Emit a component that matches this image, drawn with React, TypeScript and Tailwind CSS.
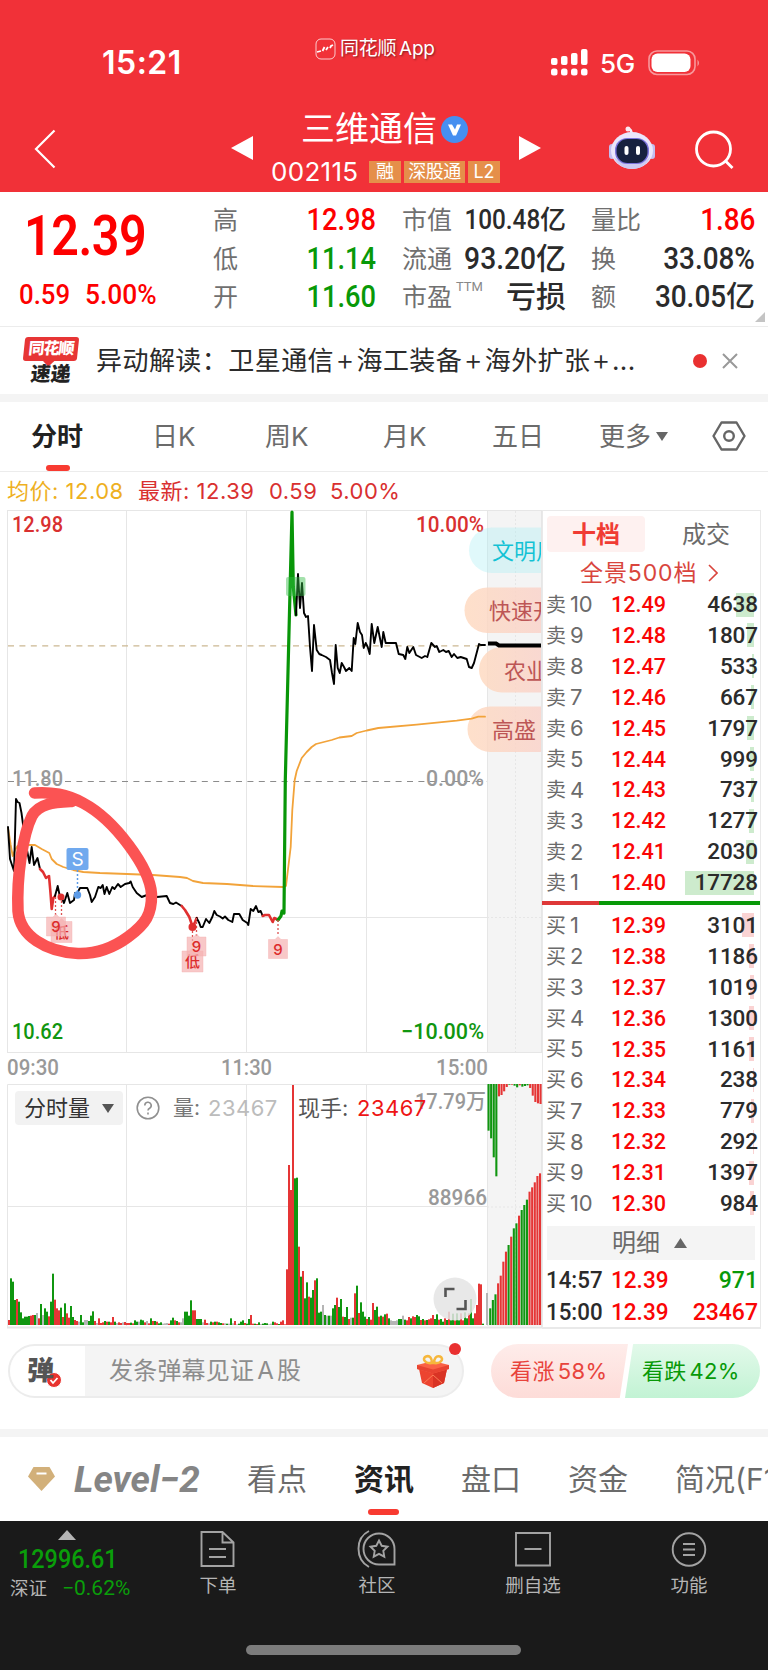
import clsx from "clsx";
import type { ReactNode } from "react";

const quoteRows = [
    {
        high: ["高", "12.98", "text-[#fd0000]"],
        cap: ["市值", "100.48", "亿"],
        ratio: ["量比", "1.86", ""],
    },
    {
        high: ["低", "11.14", "text-[#089908]"],
        cap: ["流通", "93.20", "亿"],
        ratio: ["换", "33.08%", ""],
    },
    {
        high: ["开", "11.60", "text-[#089908]"],
        cap: ["市盈", "", "亏损"],
        ratio: ["额", "30.05", "亿"],
    },
];

const periods = [
    { label: "日K", cell: "w-[113px]" },
    { label: "周K", cell: "w-[118px]" },
    { label: "月K", cell: "w-[109px]" },
    { label: "五日", cell: "w-[107px]" },
];

const asks: [number, string, number][] = [
    [10, "12.49", 4638],
    [9, "12.48", 1807],
    [8, "12.47", 533],
    [7, "12.46", 667],
    [6, "12.45", 1797],
    [5, "12.44", 999],
    [4, "12.43", 737],
    [3, "12.42", 1277],
    [2, "12.41", 2030],
    [1, "12.40", 17728],
];

const bids: [number, string, number][] = [
    [1, "12.39", 3101],
    [2, "12.38", 1186],
    [3, "12.37", 1019],
    [4, "12.36", 1300],
    [5, "12.35", 1161],
    [6, "12.34", 238],
    [7, "12.33", 779],
    [8, "12.32", 292],
    [9, "12.31", 1397],
    [10, "12.30", 984],
];

// one entry per minute: height (thirds of a pixel) + colour, r / g / n(eutral)
const volumes =
    "15r 140g 130g 75g 78r 70g 38g 20g 25g 25g 27g 28r 30r 30g 36n 20r 63g 30n 50g 40g 26r 70g 154g 76r 50r 44r 52g 24r 65g 35r 22r 57g 24g 15r 12r 10n 30g 8g 15n 15n 12g 28g 41g 12r 6n 20r 6r 8r 12g 10r 10g 8r 24r 10g 6n 8r 6r 8n 9r 6r " +
    "6r 7g 5r 14g 10g 10n 16g 14g 8r 12n 5r 20g 12r 12g 10r 5g 8g 4n 5n 6n 4r 14g 22g 14r 12g 8r 8n 20n 40g 40g 28g 74g 44r 44r 18g 18g 18g 8n 16r 6r 5n 10g 8r 10g 10r 8g 6g 5r 5n 4g 4n 20g 5n 12r 2n 4g 10g 14g 6r 4g " +
    "18g 30r 4r 4g 3r 8g 3n 4g 6g 5g 2n 4n 10g 8r 5r 3g 10r 14r 2r 167r 480r 405r 720r 440g 442g 235r 145g 162r 80g 128g 85r 82g 105g 134r 140g 37g 40g 60n 30g 28n 28g 28n 50g 60g 82r 54g 78g 25r 24g 54g 18r 22n 22g 95r 118g 36r 68g 40g 25g 18r " +
    "24g 16r 66r 45g 55g 25r 28g 25r 32g 34r 20g 14n 12n 12n 14n 18g 18g 28n 16g 14r 24r 20g 26r 24r 30g 26g 15r 18g 14r 15g 17r 20r 30r 18g 32g 16r 18g 10g 20r 15g 40r 14g 34g 14r 35g 14g 35r 14r 38g 20g 35r 78g 20g 35r 60r 124r 122r 4g 0n 96n";

const auctionTop =
    "140g 163g 220g 277g 37r 33r 22r 9r 2g 2r 5g 10g 4r 8g 6g 4g 12r 35r 54r 58r 60r";
const auctionBottom =
    "50g 75g 92g 125r 148r 190r 220r 240g 265r 290g 305g 328r 345g 360g 376g 400r 413r 428r 447r 455r";

const barColors = { r: "#e53535", g: "#109610", n: "#b5b5b5" };

const parseBars = (data: string) =>
    data.split(" ").map((item) => ({
        height: parseInt(item) / 3,
        color: barColors[item.slice(-1) as keyof typeof barColors],
    }));

const priceMorning =
    "8,827 10,859 14,871 16,799 17.5,802 19.5,803 21.5,813 23.5,828 27,850 29.5,863 31.7,847 34,865 37.5,858 40,869";
const priceMid =
    "55,896 57.7,886 60,897 61.3,897 64,903 67.3,893 70,903 74,900 75,893 77.3,893 80,888 87.3,888 90,895 91.7,902 95,897 98.3,887 100.7,888 102.7,885 104.5,894 106.7,887 109.3,894 112.3,887 114.5,889 118,884 120.7,887 125,884 129.3,883 130.7,881.5 132.7,887 136.7,893 141.7,897 147,895 155,895 157,897 166.7,896 170,903 173.3,904 176,902.5 180,905 181.7,906";
const priceNoon =
    "196.7,918 199.3,923 200.7,927 202.7,927 206,919 209.3,923 212.3,917 214.3,911 216.7,915 220,916.5 222.7,918.5 225,916.5 228.3,920 232.3,922 234,914 239.3,914 242.7,920 247.3,923 248.3,925 250.7,909 253.3,911 256,906 258.3,912 260.7,911 262.7,916";
const priceAfternoon =
    "296,615 298,574 300,608 302,583 304,613 306,617 308,616 310,647 312,671 314,625 316.7,650 319.3,654 321.7,655 326,657 330,660 332,673 334,684 335.7,645 337.7,668 339.7,673 341.7,663 344,667 346,671 349.3,668 351.7,671 353.7,638 355.3,644 357.7,623 360,632 362,635 363.7,648 365.7,643 367.7,647 369.7,654 371.7,624 374.3,643 377.7,627 381.7,647 383.3,632 385.7,643 396,643 398.7,654 403.3,655 405.3,659 407.3,647 409.3,653 413.3,647 416,655 421.7,658 425,656 427.3,657 431.3,643 435,647 436.7,646 439.3,652 443.3,650 446,652 448.7,651 451.7,657 454,654 457.3,658 460.7,657 466.7,659 469,667 471.7,668 474,663 479,644 480.7,645 485,645";
const average =
    "8,828 10.7,845 12.7,856 15,850 17.5,846 25,845 31.7,845 35,845 41.7,849 49.3,853 51.7,859 56.7,864 63.3,867 73.3,870 83.3,872 100,873 127,874 153,875 180,877 187,878 193,881 203,883 227,884 253,886 283,887 286,886 290.7,847 292.3,810 294.7,780 296.7,771 301.7,758 306.7,752 311.7,747 316,744 331.7,740 339.3,737.5 351.7,736 356.7,733 366.7,730.5 378.3,728 416.7,724.7 456.7,720.7 471.7,718.7 478.3,716.7 485,716.7";

const DIN = "font-['Roboto','Noto_Sans_CJK_SC',sans-serif]";

function Line({ points, color = "#000", width = 1.9 }: { points: string; color?: string; width?: number }) {
    return (
        <polyline points={points} fill="none" stroke={color} strokeWidth={width} strokeLinejoin="round" strokeLinecap="round" />
    );
}

function AxisText({ x, y, w, fill, children }: { x: number; y: number; w: number; fill: string; children: string }) {
    return (
        <text
            x={x}
            y={y}
            textLength={w}
            lengthAdjust="spacingAndGlyphs"
            fill={fill}
            className="text-[22px] font-medium font-['Roboto','Noto_Sans_CJK_SC',sans-serif]"
        >
            {children}
        </text>
    );
}

function StatusBar() {
    return (
        <div className="flex h-[100px] items-start">
            <div className="ml-[102px] mt-[44px] w-[213px] text-[32px] leading-[38px] font-semibold tracking-[0.5px]">
                15:21
            </div>
            <div className="mt-[36px] flex w-[235px] items-center">
                <svg width="21" height="22" viewBox="0 0 21 22" fill="none" stroke="#fff">
                    <rect x="1" y="1" width="19" height="20" rx="5" strokeOpacity=".75" />
                    <path d="M2 14l4-1M7.5 13l2-4M11 12l2-3M15 10l1-2 2-1" strokeWidth="1.8" />
                </svg>
                <span className="ml-1 text-[19px] leading-[26px] tracking-[-0.3px] [text-shadow:1px_1px_2px_rgba(0,0,0,0.45)]">
                    同花顺<span className="ml-[3px]">App</span>
                </span>
            </div>
            <svg className="mt-[49px]" width="39" height="27" viewBox="0 0 39 27" fill="#fff">
                {[9, 7, 4, 0].map((top, i) => (
                    <g key={top}>
                        <rect x={1 + i * 10} y={top} width="6.5" height={16 - top} rx="2" />
                        <rect x={1 + i * 10} y="19.5" width="6.5" height="7" rx="2.5" />
                    </g>
                ))}
            </svg>
            <span className="ml-[11px] mt-[47px] w-[48px] text-[26px] leading-[34px] font-medium tracking-[-0.3px]">5G</span>
            <svg className="mt-[50px]" width="53" height="26" viewBox="0 0 53 26">
                <rect x="1" y="1" width="46" height="23.5" rx="8" fill="none" stroke="#fff" strokeOpacity=".5" strokeWidth="1.6" />
                <rect x="3.5" y="3.5" width="39" height="18.5" rx="6" fill="#fff" />
                <path d="M49.5 9.5q3 3.500 0 7z" fill="#fff" fillOpacity=".5" />
            </svg>
        </div>
    );
}

function Robot() {
    return (
        <svg width="48" height="44" viewBox="0 0 48 44">
            <path d="M24 9C23 6 24 4 21 3" fill="none" stroke="#f4eefb" strokeWidth="2.500" strokeLinecap="round" />
            <circle cx="20" cy="3" r="2.500" fill="#fbe9f2" />
            <rect x="1" y="18" width="6" height="15" rx="3" fill="#c3bdf0" />
            <rect x="41" y="18" width="6" height="15" rx="3" fill="#c3bdf0" />
            <ellipse cx="24" cy="24.500" rx="21" ry="18.500" fill="#ebe6fb" />
            <path d="M6 31c5 16 31 16 36 0-8 9-28 9-36 0z" fill="#cdc9f1" />
            <rect x="7" y="12" width="34" height="26" rx="12" fill="#7b73dc" />
            <rect x="8.500" y="13" width="31" height="24" rx="11" fill="#17213f" />
            <rect x="16.500" y="20" width="4" height="9" rx="2" fill="#fff" />
            <rect x="28" y="20" width="4" height="9" rx="2" fill="#fff" />
        </svg>
    );
}

function Header() {
    return (
        <header className="h-[192px] bg-[#f13138] text-white">
            <StatusBar />
            <div className="flex h-[92px]">
                <svg className="mt-[29px] ml-[34px]" width="22" height="40" viewBox="0 0 22 40" fill="none" stroke="#fff" strokeWidth="2.2">
                    <path d="M20.500 1.500L2 20l18.500 18.500" />
                </svg>
                <svg className="mt-9 ml-[175px]" width="22" height="24" viewBox="0 0 22 24" fill="#fff">
                    <path d="M22 0v24L0 12z" />
                </svg>
                <div className="ml-[17px] w-[249px]">
                    <div className="mt-[9px] flex h-10 items-center pl-[31px]">
                        <span className="text-[34px] leading-10">三维通信</span>
                        <svg className="ml-[4px]" width="27" height="27" viewBox="0 0 27 27">
                            <circle cx="13.500" cy="13.500" r="13.500" fill="#468ff0" />
                            <path d="M7 8.500h4l3 5 2-5h4l-5 11h-3z" fill="#fff" />
                        </svg>
                    </div>
                    <div className="mt-[12px] flex items-center gap-[3px] text-lg leading-[22px]">
                        <span className="ml-px w-[95px] text-[26px] tracking-[0.3px]">002115</span>
                        <span className="h-[22px] w-8 bg-[#e58f4a] text-center">融</span>
                        <span className="h-[22px] w-[61px] bg-[#e58f4a] text-center tracking-[-0.5px]">深股通</span>
                        <span className="h-[22px] w-8 bg-[#e58f4a] text-center">L2</span>
                    </div>
                </div>
                <svg className="mt-9" width="22" height="24" viewBox="0 0 22 24" fill="#fff">
                    <path d="M0 0v24l22-12z" />
                </svg>
                <div className="mt-[26px] ml-[67px]">
                    <Robot />
                </div>
                <svg className="mt-[30px] ml-[39px]" width="40" height="40" viewBox="0 0 40 40" fill="none" stroke="#fff" strokeWidth="2.8">
                    <circle cx="18.500" cy="19" r="17" />
                    <path d="M30.500 31l7 7" />
                </svg>
            </div>
        </header>
    );
}

function Quote() {
    return (
        <section className={clsx("flex h-[135px] border-b border-[#ececec]", DIN)}>
            <div className="w-[213px] text-[#fd0000]">
                <div className="mt-[12px] ml-[24px] h-16 w-fit origin-left scale-x-[0.88] text-[55px] leading-[64px] font-semibold tracking-[-0.5px]">
                    12.39
                </div>
                <div className="mt-[11px] flex h-8 text-[28px] leading-[32px] font-medium">
                    <span className="ml-[19px] w-[66px] origin-left scale-x-[0.92]">0.59</span>
                    <span className="origin-left scale-x-[0.94]">5.00%</span>
                </div>
            </div>
            <div className="pt-[9px]">
                {quoteRows.map(({ high, cap, ratio }) => (
                    <div key={high[0]} className="flex h-[38.500px] items-center text-[31px] leading-[38px] font-medium text-[#2b2b2b]">
                        <span className="mt-0.5 w-[25px] text-[25px] font-normal text-[#707070]">{high[0]}</span>
                        <span className="flex w-[138px] justify-end">
                            <span className={clsx("origin-right scale-x-[0.88]", high[2])}>{high[1]}</span>
                        </span>
                        <span className="mt-0.5 ml-[26px] w-[50px] text-[25px] font-normal whitespace-nowrap text-[#707070]">
                            {cap[0]}
                        </span>
                        {cap[0] === "市盈" && (
                            <span className="-mr-[28px] mb-5 ml-1 w-[24px] text-[13px] font-normal text-[#888]">TTM</span>
                        )}
                        <span className="flex w-[114px] items-center justify-end">
                            <span
                                className={clsx(
                                    "origin-right",
                                    cap[1].length > 5 ? "scale-x-[0.9] text-[27px]" : "scale-x-[0.91]"
                                )}
                            >
                                {cap[1]}
                            </span>
                            <span className={clsx(cap[1].length > 5 ? "text-[26px]" : "text-[30px]")}>{cap[2]}</span>
                        </span>
                        <span className="mt-0.5 ml-[25px] w-[50px] text-[25px] font-normal text-[#707070]">{ratio[0]}</span>
                        <span className="flex w-[114px] justify-end">
                            <span className={clsx("origin-right scale-x-[0.9]", ratio[1] === "1.86" && "text-[#fd0000]")}>
                                {ratio[1]}
                            </span>
                            <span className="text-[29px]">{ratio[2]}</span>
                        </span>
                    </div>
                ))}
            </div>
            <svg className="mt-[120px]" width="10" height="10">
                <path d="M10 0v10H0z" fill="#c4c4c4" />
            </svg>
        </section>
    );
}

function News() {
    return (
        <section className="flex h-[67px] items-center">
            <div className="ml-6 flex w-[72px] flex-col">
                <div className="relative h-6 w-[54px] -skew-x-6 rounded-[3px] bg-[#e73535] text-center text-[16px] leading-[23px] font-black tracking-[-1px] text-white">
                    同花顺
                    <span className="absolute -bottom-[4px] left-[22px] size-2 rotate-45 bg-[#e73535]" />
                </div>
                <div className="h-[23px] -skew-x-6 pl-[7px] text-[20px] leading-[27px] font-black text-[#222]">速递</div>
            </div>
            <p className="w-[597px] text-[26px] leading-9 tracking-[0.45px] whitespace-nowrap text-[#2b2b2b]">
                异动解读：卫星通信<span className="mx-[1.500px] text-[29px] leading-none font-light">+</span>海工装备
                <span className="mx-[1.500px] text-[29px] leading-none font-light">+</span>海外扩张
                <span className="mx-[1px] text-[29px] leading-none font-light">+</span>...
            </p>
            <span className="size-3.5 rounded-full bg-[#e93030]" />
            <svg className="ml-[15px]" width="16" height="16" viewBox="0 0 16 16" stroke="#999" strokeWidth="2">
                <path d="M1 1l14 14M15 1L1 15" />
            </svg>
        </section>
    );
}

function Periods() {
    return (
        <nav className="flex h-[70px] border-b border-[#ececec] text-[26px] leading-[70px] text-[#6b6b6b]">
            <div className="flex w-[152px] flex-col pl-[31px] font-bold text-[#222]">
                <span className="h-[63px]">分时</span>
                <span className="ml-[15px] h-[6px] w-6 rounded-sm bg-[#f83b31]" />
            </div>
            {periods.map((period) => (
                <span key={period.label} className={period.cell}>
                    {period.label}
                </span>
            ))}
            <span className="w-[57px] whitespace-nowrap">更多</span>
            <svg className="mt-[30px]" width="12" height="9" fill="#666">
                <path d="M0 0h12L6 9z" />
            </svg>
            <svg className="mt-[19px] ml-[44px]" width="34" height="30" viewBox="0 0 34 30" fill="none" stroke="#666" strokeWidth="2.400">
                <path d="M9.500 1.500h15L32.500 15l-8 13.500h-15L1.500 15z" strokeLinejoin="round" />
                <circle cx="17" cy="15" r="4.800" />
            </svg>
        </nav>
    );
}

function Comment({ x, y, textX, text, cool }: { x: number; y: number; textX: number; text: string; cool?: boolean }) {
    return (
        <g>
            <path
                d={`M541 ${y}H${x + 22.75}a22.750 22.750 0 0 0 0 45.500H541z`}
                fill={cool ? "#a5edf4" : "url(#peach)"}
                fillOpacity={cool ? 0.35 : 0.82}
            />
            <text x={textX} y={y + 31.5} fill={cool ? "#14c2d4" : "#bd5656"} className="text-[22px]">
                {text}
            </text>
        </g>
    );
}

function Tag({ x, y, size = 19, fill = "#f5b0b0", children }: { x: number; y: number; size?: number; fill?: string; children: string }) {
    return (
        <g>
            <path
                d={`M${x} ${y}h${size / 2 - 3}l3-3 3 3h${size / 2 - 3}v${size}h-${size}z`}
                fill={fill}
                fillOpacity=".7"
                stroke={fill}
                strokeOpacity=".4"
                strokeLinejoin="round"
            />
            <text x={x + size / 2} y={y + size / 2 + 5.500} textAnchor="middle" fill="#dc2b2b" className="text-[15px] font-medium">
                {children}
            </text>
        </g>
    );
}

function PriceChart() {
    return (
        <svg className="block font-['Inter','Noto_Sans_CJK_SC',sans-serif]" width="542" height="574" viewBox="0 510 542 574">
            <defs>
                <linearGradient id="peach">
                    <stop offset="0" stopColor="#fed9bf" />
                    <stop offset="1" stopColor="#fad2c9" />
                </linearGradient>
                <clipPath id="plot">
                    <rect x="7" y="510" width="534" height="545" />
                </clipPath>
            </defs>
            <rect x="487" y="511" width="54" height="541" fill="#f4f4f4" />
            <g stroke="#e6e6e6" fill="none">
                <rect x="7.500" y="510.500" width="534" height="542" />
                <path d="M126.500 511v541M246.500 511v541M366.500 511v541M487.500 511v541M8 917.500h479" />
                <path d="M515.500 511v543M487 917.500h54" strokeDasharray="2 2" />
            </g>
            <path d="M8 645.800h479" stroke="#cbb892" strokeWidth="1.300" strokeDasharray="6 5.400" />
            <path d="M8 781.500h479" stroke="#8c8c8c" strokeWidth="1.200" strokeDasharray="6 5.400" />
            <AxisText x={12} y={532} w={51} fill="#d93030">12.98</AxisText>
            <AxisText x={416} y={532} w={68} fill="#d93030">10.00%</AxisText>
            <AxisText x={12} y={786} w={51} fill="#999">11.80</AxisText>
            <AxisText x={426} y={786} w={58} fill="#999">0.00%</AxisText>
            <AxisText x={12} y={1038.5} w={51} fill="#109610">10.62</AxisText>
            <AxisText x={401} y={1038.5} w={83} fill="#109610">−10.00%</AxisText>
            <AxisText x={7} y={1075} w={52} fill="#999">09:30</AxisText>
            <AxisText x={221} y={1075} w={51} fill="#999">11:30</AxisText>
            <AxisText x={436} y={1075} w={52} fill="#999">15:00</AxisText>
            <g clipPath="url(#plot)">
                <Comment x={469} y={527.5} textX={492} text="文明用" cool />
                <Comment x={464.5} y={587.5} textX={489} text="快速开" />
                <Comment x={479} y={647} textX={504} text="农业" />
                <Comment x={467.5} y={706.5} textX={492} text="高盛" />
                <Line points={average} color="#f2a33a" width={1.800} />
                <Line points={priceMorning} />
                <Line points="40,869 43,872 46,878 49,876 50.5,893 51.7,909 53.3,898 55,896" color="#e03030" width={2.600} />
                <Line points={priceMid} />
                <Line points="181.7,906 185,910 189.3,917 192.7,927 195,922 196.7,918" color="#e03030" width={2.600} />
                <Line points={priceNoon} />
                <Line points="262.7,916 265,915 269,915 272.7,922 274.3,918 278.3,920" color="#e03030" width={2.600} />
                <Line points="278,920 281,916 282,911 284,913 285.3,780 292,512 293.3,587 296,615" color="#089608" width={3.200} />
                <Line points={priceAfternoon} />
                <path d="M488 643.500h8l3 2h42" fill="none" stroke="#000" strokeWidth="4" />
            </g>
            <rect x="286" y="577" width="19.500" height="19" rx="2" fill="#35bd48" fillOpacity=".45" />
            <path d="M77.500 870v24" stroke="#5c9be8" strokeWidth="1.500" strokeDasharray="2 2" />
            <rect x="66.500" y="848" width="22" height="22" rx="2" fill="#70a9ee" />
            <text x="77.500" y="866" textAnchor="middle" fill="#fff" className="text-[19px]">S</text>
            <circle cx="77.500" cy="895" r="3.700" fill="#5c9be8" />
            <path d="M55.500 897v20M61.500 897v20M192.500 927v20M196.500 918v18M278 920v16" stroke="#dc5050" strokeWidth="1.300" strokeDasharray="2 2" />
            <circle cx="61" cy="897" r="3.500" fill="#e03030" />
            <circle cx="192.500" cy="927" r="4" fill="#e03030" />
            <Tag x={51} y={921.5} size={21}>低</Tag>
            <Tag x={46.5} y={917}>9</Tag>
            <Tag x={182} y={951} size={21}>低</Tag>
            <Tag x={187} y={937}>9</Tag>
            <Tag x={268.5} y={939.5}>9</Tag>
            {/* hand-drawn marker loop */}
            <path
                d="M34.500 793C52 792 66 794 83 803C115 820 150 868 151.500 894C152 914 146 924 128 937C113 948 97 954 78 953.500C46 952 20 936 18 911C16.500 876 23 834 32 816C39 803 55 802.500 72 801.500"
                fill="none"
                stroke="#fb5353"
                strokeWidth="11.500"
                strokeLinecap="round"
                strokeLinejoin="round"
            />
        </svg>
    );
}

function VolumeChart() {
    return (
        <div className="relative">
            <svg className="block" width="542" height="245" viewBox="0 1084 542 245">
                <rect x="487" y="1084" width="54" height="242" fill="#f4f4f4" />
                <g stroke="#e6e6e6" fill="none">
                    <path d="M541.500 1084.500H7.500V1328M126.500 1084v242M246.500 1084v242M366.500 1084v242M487.500 1084v242M541.500 1084v244M8 1206.500h479" />
                    <path d="M515.500 1084v242M487 1207h54" strokeDasharray="2 2" />
                    <path d="M7 1327.500h535" strokeWidth="2" />
                </g>
                {parseBars(volumes).map((bar, i) => (
                    <rect key={i} x={8 + i * 2} y={1325 - bar.height} width="2" height={bar.height} fill={bar.color} />
                ))}
                {parseBars(auctionTop).map((bar, i) => (
                    <rect key={i} x={487.5 + i * 2.6} y={1084} width="2.100" height={bar.height} fill={bar.color} />
                ))}
                {parseBars(auctionBottom).map((bar, i) => (
                    <rect key={i} x={489.2 + i * 2.62} y={1325 - bar.height} width="2.100" height={bar.height} fill={bar.color} />
                ))}
                <AxisText x={415} y={1109} w={71} fill="#999">17.79万</AxisText>
                <AxisText x={428} y={1204.5} w={59} fill="#999">88966</AxisText>
            </svg>
            <div className="absolute top-[7px] left-[15px] flex h-[34px] items-center text-[22px] whitespace-nowrap">
                <span className="flex h-[34px] w-[108px] items-center rounded-sm bg-[#f2f2f2] pl-[9px] text-[#333]">
                    分时量
                    <svg className="ml-3" width="12" height="9" fill="#555">
                        <path d="M0 0h12L6 9z" />
                    </svg>
                </span>
                <svg className="ml-[13px]" width="24" height="24" viewBox="0 0 24 24" fill="none" stroke="#909090" strokeWidth="1.600">
                    <circle cx="12" cy="12" r="10.800" />
                    <path d="M8.800 9.500a3.200 3.200 0 1 1 4.800 2.700c-1.100.6-1.600 1.100-1.600 2.200M12 16.500v2" />
                </svg>
                <span className="ml-[13px] w-[35px] text-[21px] text-[#777]">量:</span>
                <span className="w-[90px] tracking-[0.5px] text-[#bcbcbc]">23467</span>
                <span className="w-[59px] text-[#555]">现手:</span>
                <span className="tracking-[0.5px] text-[#ee1515]">23467</span>
            </div>
            <svg className="absolute top-[193px] left-[433px]" width="44" height="44" viewBox="0 0 44 44">
                <circle cx="22" cy="22" r="21.500" fill="#e4e4e4" fillOpacity=".85" />
                <path d="M12.500 20v-8h9M32.500 23v9h-9" fill="none" stroke="#555" strokeWidth="2.600" />
            </svg>
        </div>
    );
}

function BookRow({ side, row }: { side: "卖" | "买"; row: [number, string, number] }) {
    const [level, price, amount] = row;
    return (
        <div className={clsx("relative flex h-[30.900px] items-center text-[22.500px]", DIN)}>
            <span
                className={clsx("absolute top-[3px] right-[6px] h-6", side === "卖" ? "bg-[#cdebcd]" : "bg-[#fad3d3]")}
                style={{ width: amount / 257 }}
            />
            <span className="ml-[3px] w-[24px] text-[20px] text-[#6b6b6b]">{side}</span>
            <span className="w-[41px] font-['Inter'] text-[22px] tracking-[-0.3px] text-[#6b6b6b]">{level}</span>
            <span className="w-[70px] origin-left scale-x-[0.96] text-[22.500px] font-medium text-[#fa0505]">{price}</span>
            <span className="relative ml-auto pr-[2px] font-medium tracking-[-0.1px] text-[#2b2b2b]">{amount}</span>
        </div>
    );
}

function Trade({ time, amount, color }: { time: string; amount: string; color: string }) {
    return (
        <div className={clsx("flex h-8 items-center text-[23px] font-medium", DIN)}>
            <span className="ml-[3px] w-[65px] origin-left scale-x-[0.97] text-[#2b2b2b]">{time}</span>
            <span className="origin-left scale-x-[0.98] text-[#fa0505]">12.39</span>
            <span className={clsx("ml-auto pr-[2px]", color)}>{amount}</span>
        </div>
    );
}

function OrderBook() {
    return (
        <aside className="h-[819px] w-[219px] border border-b-2 border-[#e9e9e9]">
            <div className="mt-[5px] ml-1 flex h-9 text-[24px] leading-[37px]">
                <span className="w-[98px] rounded-sm bg-[#fef1f0] text-center font-bold text-[#f03c34]">十档</span>
                <span className="w-[98px] pl-[37px] text-[#6b6b6b]">成交</span>
            </div>
            <div className="flex h-[37.500px] items-center pt-[5px] pl-[37px] text-[23px] tracking-[0.9px] text-[#d9453d]">
                全景500档
                <svg className="ml-[11px]" width="10" height="18" viewBox="0 0 10 18" fill="none" stroke="#d9453d" strokeWidth="1.600">
                    <path d="M1 1l8 8-8 8" />
                </svg>
            </div>
            {asks.map((row) => (
                <BookRow key={row[0]} side="卖" row={row} />
            ))}
            <div className="mt-[3px] mb-[5px] -ml-px flex h-1">
                <span className="w-[57px] bg-[#de3838]" />
                <span className="flex-1 bg-[#089908]" />
            </div>
            {bids.map((row) => (
                <BookRow key={row[0]} side="买" row={row} />
            ))}
            <div className="mt-[7px] mb-[5px] ml-1 flex h-[34px] w-[208px] items-center bg-[#f4f4f4] pl-[65px] text-[24px] text-[#6b6b6b]">
                明细
                <svg className="ml-[14px]" width="13" height="10" fill="#666">
                    <path d="M6.500 0L13 10H0z" />
                </svg>
            </div>
            <Trade time="14:57" amount="971" color="text-[#089908]" />
            <Trade time="15:00" amount="23467" color="text-[#fa0505]" />
        </aside>
    );
}

function Gift() {
    return (
        <svg width="32" height="34" viewBox="0 0 32 34">
            <path d="M2 15l14 4 14-4-3 14-11 5-11-5z" fill="#ec4430" />
            <path d="M16 19l14-4-3 14-11 5z" fill="#d93324" />
            <path d="M0 11l16-4 16 4v4l-16 4.500L0 15z" fill="#fa6246" />
            <path d="M0 11l16 4.500L32 11v4l-16 4.500L0 15z" fill="#e84331" />
            <path d="M15 9C7 10 5 4 9 2.500s6 2 6 6.500zm2 0c8 1 10-5 6-6.500S17 5 17 9z" fill="none" stroke="#f6b73c" strokeWidth="2.500" />
            <path d="M7 29l9-8 9 8" fill="none" stroke="#fb7b55" />
        </svg>
    );
}

function CommentBar() {
    return (
        <section className="flex h-[100px] pt-[15px]">
            <div className="relative ml-2 flex h-[54px] w-[456px] items-center rounded-full border-2 border-[#ececec] bg-[#f4f4f4]">
                <div className="flex h-full w-[75px] items-center rounded-l-full bg-white pl-[17px] text-[27px] font-black text-[#555]">
                    <span className="-skew-x-3">弹</span>
                    <svg className="-ml-[8px] mt-[17px]" width="16" height="16" viewBox="0 0 16 16">
                        <circle cx="8" cy="8" r="7.500" fill="#e8332f" stroke="#fff" />
                        <path d="M4.500 8l2.500 3 4.500-5" fill="none" stroke="#fff" strokeWidth="1.800" />
                    </svg>
                </div>
                <span className="ml-[24px] w-[308px] text-[24px] tracking-[0.2px] text-[#8d8d8d]">
                    发条弹幕见证<span className="mx-[3px]">A</span>股
                </span>
                <Gift />
                <span className="absolute -top-[3px] right-[1px] size-3 rounded-full bg-[#e93030]" />
            </div>
            <div className="ml-[27px] flex h-[54px] w-[269px] text-[22px] leading-[55px]">
                <div className="w-[137px] rounded-l-full bg-gradient-to-b from-[#feecea] to-[#fddcd8] pl-[19px] tracking-[0.4px] text-[#e8443c] [clip-path:polygon(0_0,100%_0,94%_100%,0_100%)]">
                    看涨<span className="ml-[3px]">58%</span>
                </div>
                <div className="-ml-[3px] w-[135px] rounded-r-full bg-gradient-to-b from-[#e2f9ea] to-[#c2f3d4] pl-[17px] tracking-[0.3px] whitespace-nowrap text-[#089908] [clip-path:polygon(6%_0,100%_0,100%_100%,0_100%)]">
                    看跌<span className="ml-[3px]">42%</span>
                </div>
            </div>
        </section>
    );
}

function InfoTabs() {
    return (
        <nav className="flex h-[84px] overflow-hidden text-[30px] leading-[84px] whitespace-nowrap text-[#6b6b6b] *:shrink-0">
            <svg className="mt-[30px] ml-7" width="27" height="24" viewBox="0 0 27 24">
                <path d="M5.500 0h16L27 9.500 13.500 24 0 9.500z" fill="#d2b07a" />
                <path d="M8.500 6.500h10" stroke="#fff" strokeWidth="2" />
            </svg>
            <span className="ml-[19px] w-[173px] font-['Roboto'] text-[37px] leading-[85px] font-bold text-[#858585] italic">
                Level−2
            </span>
            <span className="w-[107px]">看点</span>
            <span className="flex w-[107px] flex-col font-bold text-[#222]">
                <span className="h-[72px]">资讯</span>
                <span className="ml-3.5 h-[6px] w-[31px] rounded-sm bg-[#f83b31]" />
            </span>
            <span className="w-[107px]">盘口</span>
            <span className="w-[107px]">资金</span>
            <span>简况(F10)</span>
        </nav>
    );
}

function NavItem({ label, cell, children }: { label: string; cell: string; children: ReactNode }) {
    return (
        <div className={clsx("flex shrink-0 flex-col items-center pt-[9px]", cell)}>
            <svg width="40" height="38" viewBox="0 0 40 38" fill="none" stroke="#a3a3a3" strokeWidth="1.900">
                {children}
            </svg>
            <span className="mt-[4px] text-[18.500px] leading-[26px]">{label}</span>
        </div>
    );
}

function BottomNav() {
    return (
        <footer className="h-[149px] bg-[#1a1a1a] text-[#b5b5b5]">
            <div className="flex h-[124px]">
                <div className="w-[150px] shrink-0">
                    <svg className="mt-[9px] ml-[58px]" width="18" height="10" fill="#b5b5b5">
                        <path d="M9 0l9 10H0z" />
                    </svg>
                    <div className={clsx("mt-[3px] ml-[18px] h-8 w-fit origin-left scale-x-[0.9] text-[26px] leading-8 font-medium text-[#0a9e0a]", DIN)}>
                        12996.61
                    </div>
                    <div className="mt-[2px] flex h-6 items-center text-[18.500px]">
                        <span className="ml-2.5 w-[52px]">深证</span>
                        <span className={clsx("origin-left text-[21px] text-[#0a9e0a]", DIN)}>−0.62%</span>
                    </div>
                </div>
                <NavItem label="下单" cell="w-[136px]">
                    <path d="M3.500 2h21l11 10.500V36h-32zM24.500 2v10.500h11M11 19h17M11 27h17" />
                </NavItem>
                <NavItem label="社区" cell="w-[182px]">
                    <path d="M22 3.500a15.500 15.500 0 0 0 0 31h15.500V19A15.500 15.500 0 0 0 22 3.500zM12 1C-2 8-2 29 12 37" />
                    <path d="M22 10.500l2.700 5.300 5.800.9-4.200 4.100 1 5.900-5.300-2.800-5.300 2.800 1-5.900-4.200-4.100 5.800-.9z" />
                </NavItem>
                <NavItem label="删自选" cell="w-[130px]">
                    <path d="M3 3h34v32.500H3zM11.500 19h17" />
                </NavItem>
                <NavItem label="功能" cell="w-[170px] pl-[12px]">
                    <circle cx="20" cy="19.500" r="16.300" />
                    <path d="M14 14h12M14 19.500h12M14 25h12" />
                </NavItem>
            </div>
            <div className="ml-[246px] h-[10px] w-[275px] rounded-full bg-[#7c7c7c]" />
        </footer>
    );
}

export default function App() {
    return (
        <div className="w-[768px] overflow-hidden bg-white font-['Inter','Noto_Sans_CJK_SC',sans-serif]">
            <Header />
            <Quote />
            <News />
            <div className="h-2 bg-[#f4f4f4]" />
            <Periods />
            <div className="flex h-[38px] items-center pt-px pl-[7px] text-[22px] tracking-[0.5px] text-[#d93030]">
                <span className="w-[131px] text-[#eeb01f]">均价: 12.08</span>
                <span className="w-[131px]">最新: 12.39</span>
                <span className="w-[61px]">0.59</span>
                <span>5.00%</span>
            </div>
            <main className="flex">
                <div className="w-[542px]">
                    <PriceChart />
                    <VolumeChart />
                </div>
                <OrderBook />
            </main>
            <CommentBar />
            <div className="h-2 bg-[#f4f4f4]" />
            <InfoTabs />
            <BottomNav />
        </div>
    );
}
